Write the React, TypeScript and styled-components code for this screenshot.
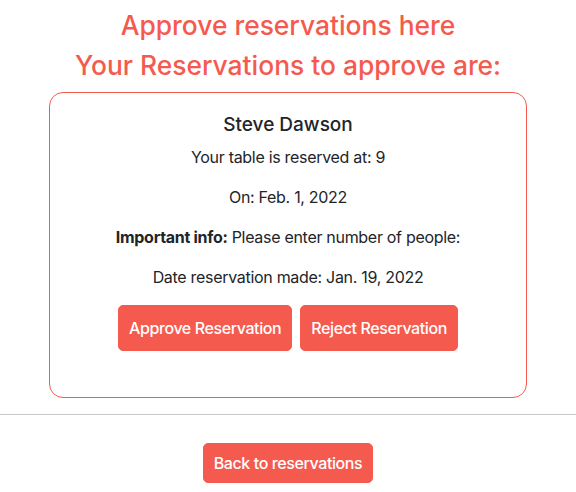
import React from 'react';
import styled, { createGlobalStyle } from 'styled-components';

const red = '#f55a4f';

const GlobalStyle = createGlobalStyle`
  body {
    margin: 0;
    background: #fff;
    color: #212529;
    font-family: Inter, "Noto Sans", sans-serif;
    font-size: 16px;
    line-height: 1.5;
  }
  * {
    box-sizing: border-box;
  }
`;

const Page = styled.div`
  display: flex;
  flex-direction: column;
  align-items: center;
  padding-top: 10px;
`;

const Heading = styled.h2`
  margin: 0 0 8px;
  color: ${red};
  font-size: 26.4px;
  font-weight: 500;
  line-height: 1.2;
  text-align: center;
`;

const Card = styled.div`
  width: 478px;
  margin-top: 3px;
  padding: 20px 20px 46px;
  border: 1px solid ${red};
  border-radius: 14px;
  text-align: center;
`;

const Name = styled.h5`
  margin: 0 0 8px;
  font-size: 19px;
  font-weight: 500;
  line-height: 24px;
`;

const Line = styled.p`
  margin: 0 0 16px;
  letter-spacing: -0.3px;
`;

const Actions = styled.div`
  display: flex;
  justify-content: center;
  gap: 8px;
`;

const Button = styled.button<{ $large?: boolean }>`
  padding: ${(p) => (p.$large ? '10px 10px' : '7px 10px')};
  border: 1px solid ${red};
  border-radius: 5px;
  background: ${red};
  color: #fff;
  font-family: inherit;
  font-size: 16px;
  font-weight: 500;
  letter-spacing: -0.4px;
  line-height: 24px;
  cursor: pointer;
`;

const Divider = styled.hr`
  align-self: stretch;
  margin: 16px 0 28px;
  border: 0;
  border-top: 1px solid #c8c8c8;
`;

export default function App() {
  return (
    <>
      <GlobalStyle />
      <Page>
        <Heading>Approve reservations here</Heading>
        <Heading>Your Reservations to approve are:</Heading>
        <Card>
          <Name>Steve Dawson</Name>
          <Line>Your table is reserved at: 9</Line>
          <Line>On: Feb. 1, 2022</Line>
          <Line>
            <b>Important info:</b> Please enter number of people:
          </Line>
          <Line>Date reservation made: Jan. 19, 2022</Line>
          <Actions>
            <Button $large>Approve Reservation</Button>
            <Button $large>Reject Reservation</Button>
          </Actions>
        </Card>
        <Divider />
        <Button>Back to reservations</Button>
      </Page>
    </>
  );
}
